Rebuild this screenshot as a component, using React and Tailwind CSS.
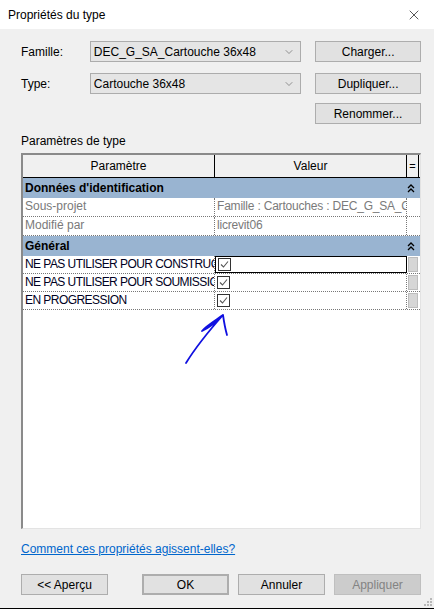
import { X, ChevronDown } from "lucide-react";

const font = { fontFamily: '"Liberation Sans", Arial, sans-serif' };

function Button({ children, className = "" }) {
  return (
    <button
      type="button"
      className={`flex h-[21px] items-center justify-center border border-[#adadad] bg-[#e1e1e1] text-[12px] text-black ${className}`}
    >
      {children}
    </button>
  );
}

function Combo({ value }) {
  return (
    <div className="flex h-[21px] w-[212px] items-center justify-between border border-[#acacac] bg-[#e5e5e5] pl-[3px] pr-[5px] text-[12px]">
      <span>{value}</span>
      <ChevronDown size={12} strokeWidth={1.2} className="text-[#555]" />
    </div>
  );
}

function Collapse() {
  return (
    <svg width="8" height="9" viewBox="0 0 8 9" className="text-black">
      <path d="M1 4 L4 1 L7 4 M1 8 L4 5 L7 8" fill="none" stroke="currentColor" strokeWidth="1.3" />
    </svg>
  );
}

function Check() {
  return (
    <span className="flex h-[13px] w-[13px] items-center justify-center border border-[#333] bg-white">
      <svg width="11" height="11" viewBox="0 0 11 11">
        <path d="M2 5.5 L4.5 8 L9 2.5" fill="none" stroke="#555" strokeWidth="1.1" />
      </svg>
    </span>
  );
}

function Group({ label }) {
  return (
    <div className="flex h-[20px] items-center justify-between bg-[#99b4d1] pl-[2px] pr-[5px] text-[12px] font-bold text-black">
      <span>{label}</span>
      <Collapse />
    </div>
  );
}

function InfoRow({ name, value, h }) {
  return (
    <div className={`flex ${h} border-b border-dotted border-[#777] text-[12px] text-[#7a7a7a]`}>
      <div className="w-[192px] overflow-hidden whitespace-nowrap border-r border-dotted border-[#777] pl-[2px] leading-[17px]">
        {name}
      </div>
      <div className="w-[192px] overflow-hidden whitespace-nowrap border-r border-dotted border-[#777] pl-[2px] leading-[17px] tracking-[-0.2px]">
        {value}
      </div>
      <div className="w-[12px]" />
    </div>
  );
}

function CheckRow({ name, selected }) {
  return (
    <div className="flex h-[18px] border-b border-dotted border-[#777] text-[12px] text-[#000022]">
      <div className="w-[192px] overflow-hidden whitespace-nowrap border-r border-dotted border-[#777] pl-[2px] leading-[17px] tracking-[-0.55px]">
        {name}
      </div>
      <div
        className={`flex w-[192px] items-center pl-[2px] ${
          selected ? "border-[1.5px] border-black" : "border-r border-dotted border-[#777]"
        }`}
      >
        <Check />
      </div>
      <div className="flex w-[12px] items-center justify-center">
        <span className="h-[15px] w-[10px] border border-[#bdbdbd] bg-[#d6d6d6]" />
      </div>
    </div>
  );
}

export default function App() {
  return (
    <div
      className="relative flex h-[609px] w-[434px] flex-col border-b border-black bg-[#f0f0f0] text-black"
      style={font}
    >
      <div className="flex h-[29px] shrink-0 items-center justify-between bg-white pl-[8px] pr-[12px] text-[12px]">
        <span>Propriétés du type</span>
        <X size={16} strokeWidth={1} />
      </div>

      <div className="flex flex-col pl-[21px] pr-[13px] pt-[12px]">
        <div className="flex items-center">
          <span className="w-[69px] text-[12px]">Famille:</span>
          <Combo value="DEC_G_SA_Cartouche 36x48" />
          <Button className="ml-[14px] w-[106px]">Charger...</Button>
        </div>
        <div className="mt-[11px] flex items-center">
          <span className="w-[69px] text-[12px]">Type:</span>
          <Combo value="Cartouche 36x48" />
          <Button className="ml-[14px] w-[106px]">Dupliquer...</Button>
        </div>
        <div className="mt-[9px] flex justify-end">
          <Button className="w-[106px]">Renommer...</Button>
        </div>

        <div className="mt-[9px] text-[12px] leading-[16px]">Paramètres de type</div>

        <div className="mt-[4px] flex h-[376px] w-[400px] flex-col border-b border-l-2 border-r border-t-2 border-b-[#e3e3e3] border-l-[#8a8a8a] border-r-[#e3e3e3] border-t-[#8a8a8a] bg-white">
          <div className="flex h-[23px] border-b border-black bg-[#f0f0f0] text-[12px]">
            <div className="flex w-[192px] items-center justify-center border-r border-black">Paramètre</div>
            <div className="flex w-[192px] items-center justify-center border-r border-black">Valeur</div>
            <div className="flex w-[12px] items-center justify-center border-r border-black text-[11px]">=</div>
          </div>
          <Group label="Données d'identification" />
          <InfoRow name="Sous-projet" value="Famille : Cartouches : DEC_G_SA_C" h="h-[19px]" />
          <InfoRow name="Modifié par" value="licrevit06" h="h-[19px]" />
          <Group label="Général" />
          <CheckRow name="NE PAS UTILISER POUR CONSTRUCTION" selected />
          <CheckRow name="NE PAS UTILISER POUR SOUMISSION" />
          <CheckRow name="EN PROGRESSION" />
        </div>

        <a className="mt-[12px] w-fit text-[12px] leading-[16px] text-[#0066cc] underline">
          Comment ces propriétés agissent-elles?
        </a>

        <div className="mt-[17px] flex">
          <Button className="w-[87px]">&lt;&lt; Aperçu</Button>
          <Button className="ml-[34px] w-[87px] border-2 border-[#0078d7]">OK</Button>
          <Button className="ml-[9px] w-[87px]">Annuler</Button>
          <button
            type="button"
            className="ml-[9px] flex h-[21px] w-[87px] items-center justify-center border border-[#bfbfbf] bg-[#cccccc] text-[12px] text-[#838383]"
          >
            Appliquer
          </button>
        </div>
      </div>

      <svg
        className="pointer-events-none absolute left-[180px] top-[310px]"
        width="56"
        height="60"
        viewBox="0 0 56 60"
      >
        <path
          d="M6 53 C14 40 28 22 43 5 M43 5 C36 10 26 16 22 21 C28 18 36 12 42 6 M43 5 C44 12 45 18 47 25"
          fill="none"
          stroke="#1010e0"
          strokeWidth="1.8"
          strokeLinecap="round"
          strokeLinejoin="round"
        />
      </svg>

      <svg className="absolute bottom-[2px] right-[2px]" width="8" height="8" viewBox="0 0 8 8">
        <rect x="6" y="0" width="2" height="2" fill="#b8b8b8" />
        <rect x="3" y="3" width="2" height="2" fill="#b8b8b8" />
        <rect x="6" y="3" width="2" height="2" fill="#b8b8b8" />
        <rect x="0" y="6" width="2" height="2" fill="#b8b8b8" />
        <rect x="3" y="6" width="2" height="2" fill="#b8b8b8" />
        <rect x="6" y="6" width="2" height="2" fill="#b8b8b8" />
      </svg>
    </div>
  );
}
